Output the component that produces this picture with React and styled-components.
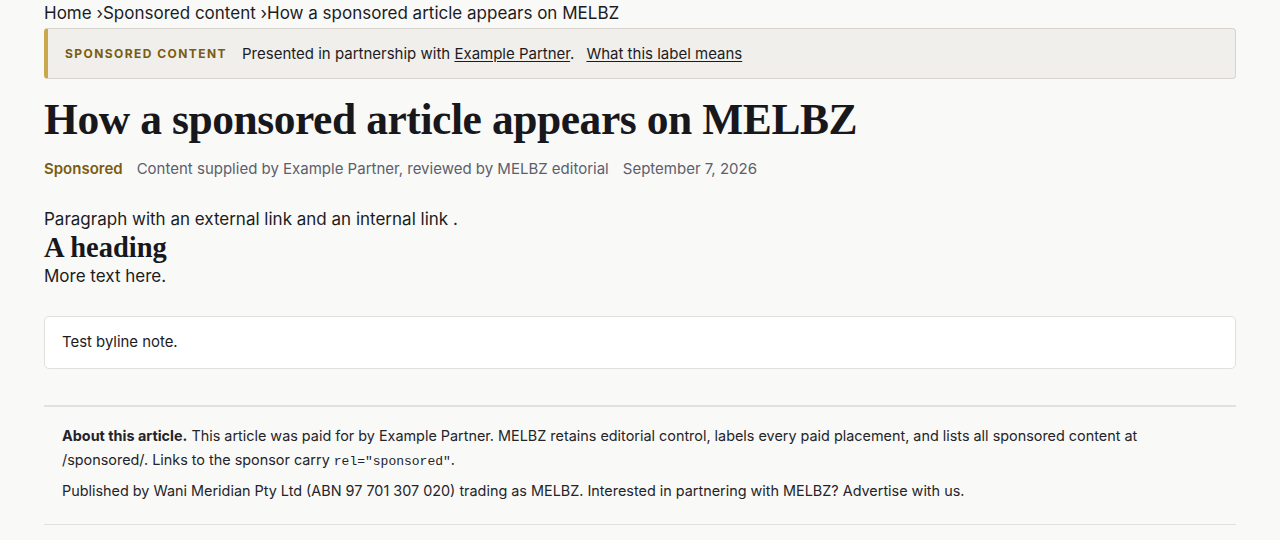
import React from 'react';
import styled, { createGlobalStyle } from 'styled-components';

const GlobalStyle = createGlobalStyle`
  html, body {
    margin: 0;
    padding: 0;
    background: #f9f9f7;
  }
  body {
    font-family: Inter, "Noto Sans", sans-serif;
    color: #1c1c1f;
  }
`;

const Page = styled.div`
  padding: 1px 44px 0;
`;

const Breadcrumb = styled.nav`
  font-size: 17px;
  line-height: 24px;
  color: #1c1c1f;
`;

const Crumb = styled.span``;

const Banner = styled.div`
  display: flex;
  align-items: center;
  gap: 15px;
  height: 51px;
  box-sizing: border-box;
  margin-top: 3px;
  padding: 0 18px 0 17px;
  background: #f0efeb;
  border: 1px solid #d6d4cd;
  border-left: 4px solid #caa74c;
  border-radius: 4px;
  font-size: 15px;
`;

const BannerLabel = styled.span`
  font-size: 12px;
  font-weight: 700;
  letter-spacing: 0.12em;
  text-transform: uppercase;
  color: #7a5c12;
`;

const BannerText = styled.span`
  color: #1c1c1f;
`;

const TextLink = styled.a`
  color: inherit;
  text-decoration: underline;
  text-underline-offset: 2px;
  margin-left: ${p => (p.$gap ? '12px' : '0')};
`;

const Title = styled.h1`
  margin: 16px 0 0;
  font-family: "Liberation Serif", "DejaVu Serif", serif;
  font-weight: 700;
  font-size: 43.5px;
  line-height: 48px;
  color: #18171c;
  letter-spacing: -0.01em;
`;

const Meta = styled.div`
  display: flex;
  gap: 14px;
  margin-top: 16px;
  font-size: 15px;
  line-height: 20px;
  color: #5c5f6c;
`;

const MetaLabel = styled.span`
  font-weight: 600;
  color: #7a5c12;
`;

const Body = styled.div`
  margin-top: 28px;
  font-size: 17px;
  line-height: 24px;
`;

const Para = styled.p`
  margin: 0;
`;

const SubHeading = styled.h2`
  margin: 0;
  font-family: "Liberation Serif", "DejaVu Serif", serif;
  font-weight: 700;
  font-size: 28.5px;
  line-height: 33px;
  color: #18171c;
`;

const Note = styled.div`
  margin-top: 28px;
  padding: 16px 17px;
  background: #ffffff;
  border: 1px solid #e1e0dc;
  border-radius: 5px;
  font-size: 14.9px;
  line-height: 19px;
`;

const About = styled.footer`
  margin-top: 36px;
  padding: 17px 40px 21px 18px;
  border-top: 2px solid #e2e1dc;
  border-bottom: 1px solid #e2e1dc;
  font-size: 14.4px;
  line-height: 24px;
  color: #24242a;
`;

const AboutPara = styled.p`
  margin: 0 0 7px;
  &:last-child {
    margin-bottom: 0;
  }
`;

const Code = styled.code`
  font-family: "Liberation Mono", monospace;
  font-size: 13px;
  line-height: 1;
`;

export default function App() {
  return (
    <Page>
      <GlobalStyle />
      <Breadcrumb>
        <Crumb>Home ›</Crumb>
        <Crumb>Sponsored content ›</Crumb>
        <Crumb>How a sponsored article appears on MELBZ</Crumb>
      </Breadcrumb>
      <Banner>
        <BannerLabel>Sponsored content</BannerLabel>
        <BannerText>
          Presented in partnership with <TextLink href="#">Example Partner</TextLink>.
          <TextLink href="#" $gap>What this label means</TextLink>
        </BannerText>
      </Banner>
      <Title>How a sponsored article appears on MELBZ</Title>
      <Meta>
        <MetaLabel>Sponsored</MetaLabel>
        <span>Content supplied by Example Partner, reviewed by MELBZ editorial</span>
        <span>September 7, 2026</span>
      </Meta>
      <Body>
        <Para>Paragraph with an external link and an internal link .</Para>
        <SubHeading>A heading</SubHeading>
        <Para>More text here.</Para>
      </Body>
      <Note>Test byline note.</Note>
      <About>
        <AboutPara>
          <strong>About this article.</strong> This article was paid for by Example Partner. MELBZ retains
          editorial control, labels every paid placement, and lists all sponsored content at /sponsored/.
          Links to the sponsor carry <Code>rel="sponsored"</Code>.
        </AboutPara>
        <AboutPara>
          Published by Wani Meridian Pty Ltd (ABN 97 701 307 020) trading as MELBZ. Interested in
          partnering with MELBZ? Advertise with us.
        </AboutPara>
      </About>
    </Page>
  );
}
